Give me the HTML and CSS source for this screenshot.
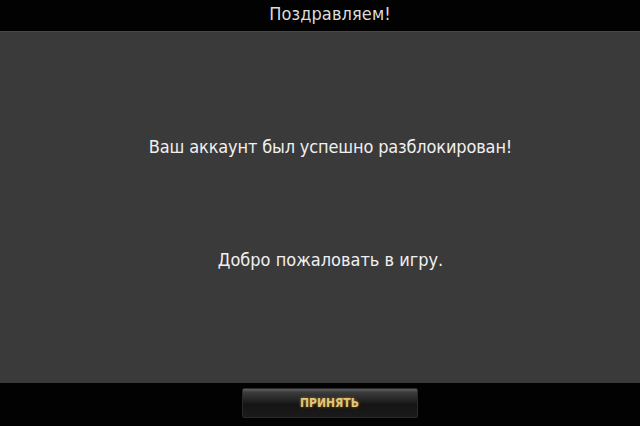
FILE: index.html
```html
<!DOCTYPE html>
<html lang="ru">
<head>
<meta charset="utf-8">
<link rel="stylesheet" href="styles.css">
</head>
<body>
<div class="dialog">
  <div class="titlebar">Поздравляем!</div>
  <div class="content">
    <p class="msg msg-1">Ваш аккаунт был успешно разблокирован!</p>
    <p class="msg msg-2">Добро пожаловать в игру.</p>
  </div>
  <div class="footer">
    <button class="accept">ПРИНЯТЬ</button>
  </div>
</div>
</body>
</html>
```
FILE: styles.css
```css
html, body {
  margin: 0;
  padding: 0;
  background: #000;
}
.dialog {
  width: 640px;
  height: 426px;
  display: flex;
  flex-direction: column;
  font-family: "DejaVu Sans Condensed", "Liberation Sans", sans-serif;
}
.titlebar {
  height: 31px;
  box-sizing: border-box;
  padding: 3px 0 0 20px;
  background: #020202;
  color: #dcdcdc;
  font-size: 18px;
  letter-spacing: 0.1px;
  display: flex;
  align-items: flex-start;
  justify-content: center;
}
.content {
  height: 352px;
  box-sizing: border-box;
  padding-left: 21px;
  background: #3a3a3a;
  box-shadow: inset 0 1px 0 #484848;
  display: flex;
  flex-direction: column;
  align-items: center;
  color: #f0f0f0;
}
.msg {
  margin: 0;
  font-size: 18px;
}
.msg-1 { margin-top: 105px; letter-spacing: -0.15px; }
.msg-2 { margin-top: 92px; }
.footer {
  flex: 1;
  background: #020202;
  display: flex;
  justify-content: center;
  align-items: flex-start;
  padding-top: 5px;
  padding-left: 19px;
}
.accept {
  width: 176px;
  height: 30px;
  border: 1px solid #2a2a2a;
  border-radius: 2px;
  background: linear-gradient(#606060 0%, #3c3c3c 12%, #1f1f1f 45%, #151515 55%, #1a1a1a 100%);
  color: #e2c67a;
  font-family: "DejaVu Sans Condensed", "Liberation Sans", sans-serif;
  font-weight: bold;
  font-size: 12px;
  padding: 0;
  text-shadow: 0 0 3px rgba(200, 150, 40, 0.7);
}
```
